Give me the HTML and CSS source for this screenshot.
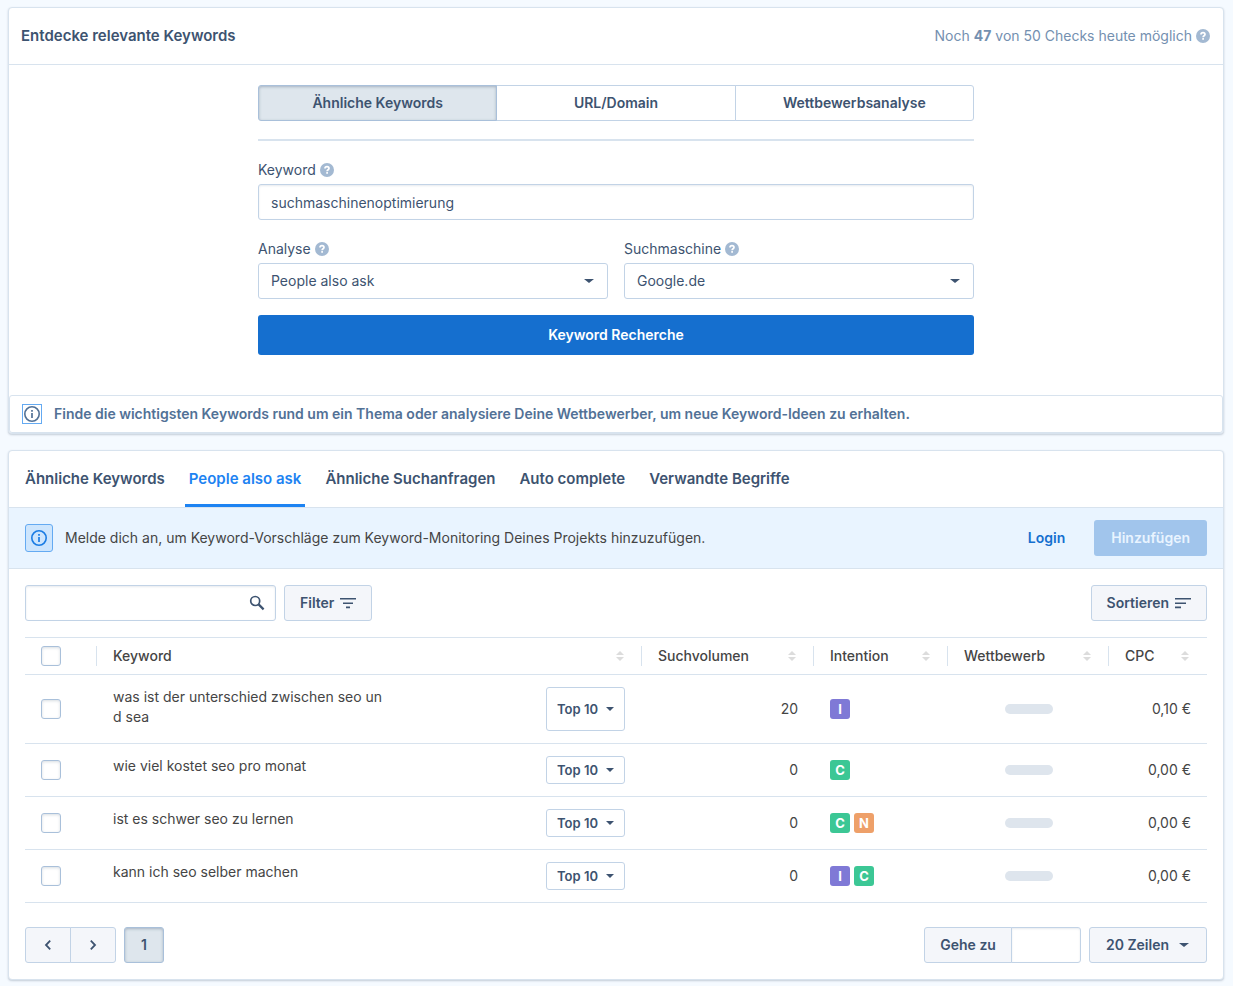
FILE: index.html
```html
<!DOCTYPE html>
<html lang="de">
<head>
<meta charset="UTF-8">
<meta name="viewport" content="width=device-width, initial-scale=1.0">
<title>Keyword Recherche</title>
<link rel="stylesheet" href="styles.css">
</head>
<body>
<svg class="sprite" aria-hidden="true">
  <symbol id="help" viewBox="0 0 14 14">
    <circle cx="7" cy="7" r="7" fill="#a3b9d2"/>
    <path d="M5 5.6C5 4.4 5.8 3.7 7 3.7s2 .6 2 1.7c0 1.3-1.9 1.4-1.9 2.8" fill="none" stroke="#fff" stroke-width="1.7"/>
    <rect x="6.2" y="9.1" width="1.8" height="1.7" rx=".5" fill="#fff"/>
  </symbol>
  <symbol id="info" viewBox="0 0 18 18">
    <circle cx="9" cy="9" r="7.2" fill="none" stroke="currentColor" stroke-width="1.6"/>
    <path d="M9 8v5M9 5v1.7" fill="none" stroke="currentColor" stroke-width="1.7"/>
  </symbol>
  <symbol id="search" viewBox="0 0 16 16">
    <circle cx="6.2" cy="6" r="4.5" fill="none" stroke="currentColor" stroke-width="1.7"/>
    <path d="M9.6 9.4l5 5" fill="none" stroke="currentColor" stroke-width="2.2"/>
  </symbol>
  <symbol id="filter" viewBox="0 0 16 12">
    <path d="M0 1.8h16M3 6.2h10M6 10.4h4" fill="none" stroke="currentColor" stroke-width="1.6"/>
  </symbol>
  <symbol id="sort" viewBox="0 0 16 12">
    <path d="M0 1.8h16M0 6.2h11M0 10.4h6" fill="none" stroke="currentColor" stroke-width="1.6"/>
  </symbol>
  <symbol id="sorter" viewBox="0 0 8 10">
    <path d="M4 0l4 4H0zM4 10l4-4H0z" fill="#dcdcdc"/>
  </symbol>
  <symbol id="left" viewBox="0 0 8 10">
    <path d="M6.2.7L2 5l4.2 4.3" fill="none" stroke="currentColor" stroke-width="1.8"/>
  </symbol>
  <symbol id="right" viewBox="0 0 8 10">
    <path d="M1.8.7L6 5 1.8 9.3" fill="none" stroke="currentColor" stroke-width="1.8"/>
  </symbol>
</svg>

<section class="card">
  <header class="card-head">
    <h1>Entdecke relevante Keywords</h1>
    <p class="quota">Noch <b>47</b> von 50 Checks heute möglich <svg class="help"><use href="#help"/></svg></p>
  </header>
  <form class="search-form">
    <div class="switch">
      <button type="button" class="active">Ähnliche Keywords</button>
      <button type="button">URL/Domain</button>
      <button type="button">Wettbewerbsanalyse</button>
    </div>
    <hr>
    <div class="field">
      <label for="keyword">Keyword <svg class="help"><use href="#help"/></svg></label>
      <input type="text" id="keyword" value="suchmaschinenoptimierung">
    </div>
    <div class="field-row">
      <div class="field">
        <label for="analyse">Analyse <svg class="help"><use href="#help"/></svg></label>
        <div class="select">
          <select id="analyse"><option>People also ask</option></select>
        </div>
      </div>
      <div class="field">
        <label for="engine">Suchmaschine <svg class="help"><use href="#help"/></svg></label>
        <div class="select">
          <select id="engine"><option>Google.de</option></select>
        </div>
      </div>
    </div>
    <button type="button" class="submit">Keyword Recherche</button>
  </form>
  <div class="hint">
    <span class="hint-icon"><svg><use href="#info"/></svg></span>
    <p>Finde die wichtigsten Keywords rund um ein Thema oder analysiere Deine Wettbewerber, um neue Keyword-Ideen zu erhalten.</p>
  </div>
</section>

<section class="card">
  <nav class="tabs">
    <a href="#">Ähnliche Keywords</a>
    <a href="#" class="active">People also ask</a>
    <a href="#">Ähnliche Suchanfragen</a>
    <a href="#">Auto complete</a>
    <a href="#">Verwandte Begriffe</a>
  </nav>
  <div class="notice">
    <span class="notice-icon"><svg><use href="#info"/></svg></span>
    <p>Melde dich an, um Keyword-Vorschläge zum Keyword-Monitoring Deines Projekts hinzuzufügen.</p>
    <a href="#" class="login">Login</a>
    <button type="button" class="add" disabled>Hinzufügen</button>
  </div>

  <div class="content">
    <div class="toolbar">
      <div class="search-box">
        <input type="text" aria-label="Suche">
        <svg><use href="#search"/></svg>
      </div>
      <button type="button" class="btn">Filter <svg><use href="#filter"/></svg></button>
      <button type="button" class="btn push">Sortieren <svg><use href="#sort"/></svg></button>
    </div>

    <table>
      <colgroup>
        <col class="col-check">
        <col>
        <col class="col-volume">
        <col class="col-intent">
        <col class="col-comp">
        <col class="col-cpc">
      </colgroup>
      <thead>
        <tr>
          <th><div class="th"><input type="checkbox" aria-label="Alle auswählen"></div></th>
          <th><div class="th">Keyword <svg><use href="#sorter"/></svg></div></th>
          <th><div class="th">Suchvolumen <svg><use href="#sorter"/></svg></div></th>
          <th><div class="th">Intention <svg><use href="#sorter"/></svg></div></th>
          <th><div class="th">Wettbewerb <svg><use href="#sorter"/></svg></div></th>
          <th><div class="th">CPC <svg><use href="#sorter"/></svg></div></th>
        </tr>
      </thead>
      <tbody>
        <tr>
          <td><input type="checkbox" aria-label="Zeile auswählen"></td>
          <td><div class="kw"><span>was ist der unterschied zwischen seo und sea</span><button type="button" class="top">Top 10</button></div></td>
          <td class="num">20</td>
          <td><div class="tags"><span class="tag i">I</span></div></td>
          <td><div class="bar"></div></td>
          <td class="num">0,10 €</td>
        </tr>
        <tr>
          <td><input type="checkbox" aria-label="Zeile auswählen"></td>
          <td><div class="kw"><span>wie viel kostet seo pro monat</span><button type="button" class="top">Top 10</button></div></td>
          <td class="num">0</td>
          <td><div class="tags"><span class="tag c">C</span></div></td>
          <td><div class="bar"></div></td>
          <td class="num">0,00 €</td>
        </tr>
        <tr>
          <td><input type="checkbox" aria-label="Zeile auswählen"></td>
          <td><div class="kw"><span>ist es schwer seo zu lernen</span><button type="button" class="top">Top 10</button></div></td>
          <td class="num">0</td>
          <td><div class="tags"><span class="tag c">C</span><span class="tag n">N</span></div></td>
          <td><div class="bar"></div></td>
          <td class="num">0,00 €</td>
        </tr>
        <tr>
          <td><input type="checkbox" aria-label="Zeile auswählen"></td>
          <td><div class="kw"><span>kann ich seo selber machen</span><button type="button" class="top">Top 10</button></div></td>
          <td class="num">0</td>
          <td><div class="tags"><span class="tag i">I</span><span class="tag c">C</span></div></td>
          <td><div class="bar"></div></td>
          <td class="num">0,00 €</td>
        </tr>
      </tbody>
    </table>

    <footer class="pager">
      <div class="group">
        <button type="button" class="btn arrow" aria-label="Zurück"><svg><use href="#left"/></svg></button>
        <button type="button" class="btn arrow" aria-label="Weiter"><svg><use href="#right"/></svg></button>
      </div>
      <button type="button" class="btn current">1</button>
      <div class="group push">
        <label class="btn" for="page">Gehe zu</label>
        <input type="text" id="page" class="page">
      </div>
      <button type="button" class="btn rows">20 Zeilen</button>
    </footer>
  </div>
</section>
</body>
</html>
```
FILE: styles.css
```css
* {
  box-sizing: border-box;
}
body {
  margin: 0;
  padding: 7px 9px 6px 8px;
  background: #f5faff;
  color: #454545;
  font: 14px/20px Inter, "Liberation Sans", sans-serif;
}
h1, p {
  margin: 0;
}
button, input, select {
  font: inherit;
  color: #3d5370;
  margin: 0;
}
button {
  font-weight: 600;
  padding: 0;
  border-radius: 3px;
}
a {
  text-decoration: none;
}
.sprite {
  position: absolute;
  width: 0;
  height: 0;
}
.card {
  background: #fff;
  border: 1px solid #d8e3ee;
  border-radius: 4px;
  box-shadow: 0 1px 2px rgba(50, 70, 100, 0.25);
  margin-bottom: 16px;
}
.card:last-child {
  margin-bottom: 0;
}
.card-head {
  display: flex;
  justify-content: space-between;
  align-items: center;
  height: 57px;
  padding: 0 13px 0 12px;
  border-bottom: 1px solid #d8e3ee;
}
h1 {
  font-size: 15px;
  font-weight: 600;
  color: #3d5370;
}
.quota {
  display: flex;
  align-items: center;
  gap: 4px;
  color: #7490b0;
}
.quota b {
  font-weight: 700;
}
.help {
  width: 14px;
  height: 14px;
}

/* search form */
.search-form {
  max-width: 716px;
  margin: 0 auto;
  padding: 20px 0 40px;
}
.switch {
  display: flex;
}
.switch button {
  flex: 1;
  height: 36px;
  margin-left: -1px;
  background: #fff;
  border: 1px solid #c2d3e6;
  border-radius: 0;
}
.switch button:first-child {
  margin-left: 0;
  border-radius: 3px 0 0 3px;
}
.switch button:last-child {
  border-radius: 0 3px 3px 0;
}
.switch .active,
.btn.current {
  position: relative;
  background: #dee6ed;
  border-color: #a9c0da;
  box-shadow: inset 0 1px 3px rgba(61, 83, 112, 0.35);
}
hr {
  height: 2px;
  margin: 18px 0 19px;
  border: 0;
  background: #d8e3ee;
}
.field {
  flex: 1;
}
.field label {
  display: flex;
  align-items: center;
  gap: 4px;
  margin-bottom: 4px;
  color: #3d5370;
}
.field input,
.select select,
.search-box input {
  display: block;
  width: 100%;
  height: 36px;
  padding: 0 12px;
  border: 1px solid #c2d3e6;
  border-radius: 3px;
  background: #fff;
}
.field input,
.search-box input,
.page {
  box-shadow: inset 0 1px 2px rgba(61, 83, 112, 0.12);
}
.field-row {
  display: flex;
  gap: 16px;
  margin: 19px 0 16px;
}
.select {
  position: relative;
}
.select select {
  appearance: none;
}
.select::after,
.top::after,
.rows::after {
  content: "";
  border: 5px solid transparent;
  border-top: 4px solid #3d5370;
  border-bottom: 0;
}
.select::after {
  position: absolute;
  right: 14px;
  top: 16px;
  pointer-events: none;
}
.submit {
  width: 100%;
  height: 40px;
  border: 0;
  background: #156fcf;
  color: #fff;
}
.hint {
  display: flex;
  align-items: center;
  gap: 12px;
  height: 38px;
  padding: 0 12px 0 12px;
  border: 1px solid #d8e3ee;
  border-radius: 3px;
  color: #527196;
  font-weight: 600;
}
.hint-icon,
.notice-icon {
  display: grid;
  place-items: center;
  flex: none;
  width: 20px;
  height: 20px;
  border: 1px solid #64aaf2;
}
.hint-icon svg,
.notice-icon svg {
  width: 18px;
  height: 18px;
}

/* results */
.tabs {
  display: flex;
  gap: 16px;
  height: 57px;
  padding: 0 12px;
  border-bottom: 1px solid #d8e3ee;
  font-size: 15px;
  font-weight: 600;
}
.tabs a {
  padding: 18px 4px 15px;
  border-bottom: 3px solid transparent;
  color: #3d5370;
}
.tabs .active {
  color: #1d83f2;
  border-color: #1d83f2;
}
.notice {
  display: flex;
  align-items: center;
  height: 61px;
  padding: 0 16px;
  background: #e9f4ff;
  border-bottom: 1px solid #d8e3ee;
}
.notice-icon {
  width: 28px;
  height: 28px;
  margin-right: 12px;
  border-radius: 3px;
  background: #cde5fd;
  color: #1a7ce4;
}
.login {
  margin: 0 29px 0 auto;
  color: #156fcf;
  font-weight: 600;
}
.add {
  height: 36px;
  padding: 0 17px;
  border: 0;
  background: #a1c5ec;
  color: #e9f4ff;
}
.content {
  padding: 16px;
}
.toolbar,
.pager {
  display: flex;
  gap: 8px;
}
.push {
  margin-left: auto;
}
.search-box {
  position: relative;
  width: 251px;
}
.search-box svg {
  position: absolute;
  right: 11px;
  top: 10px;
  width: 16px;
  height: 16px;
  color: #3d5370;
}
.btn {
  display: flex;
  align-items: center;
  justify-content: center;
  gap: 6px;
  height: 36px;
  padding: 0 15px;
  background: #f4f6fa;
  border: 1px solid #c2d3e6;
  border-radius: 3px;
  color: #3d5370;
  font-weight: 600;
}
.toolbar .btn svg {
  width: 16px;
  height: 12px;
}

table {
  width: 100%;
  margin: 16px 0 24px;
  border-collapse: separate;
  border-spacing: 0;
  table-layout: fixed;
  border-top: 1px solid #d8e3ee;
}
.col-check {
  width: 72px;
}
.col-volume {
  width: 172px;
}
.col-intent {
  width: 134px;
}
.col-comp {
  width: 161px;
}
.col-cpc {
  width: 98px;
}
th {
  padding: 8px 0;
  border-bottom: 1px solid #d8e3ee;
  font-weight: 500;
  text-align: left;
}
.th {
  display: flex;
  align-items: center;
  justify-content: space-between;
  height: 20px;
  padding: 0 17px 0 16px;
  border-right: 1px solid #d8e3ee;
}
th:last-child .th {
  border-right-color: transparent;
}
.th svg {
  width: 8px;
  height: 10px;
}
td {
  padding: 12px 16px;
  border-bottom: 1px solid #d8e3ee;
}
input[type="checkbox"] {
  display: block;
  appearance: none;
  width: 20px;
  height: 20px;
  border: 1px solid #a9c0da;
  border-radius: 3px;
  background: #fff;
  box-shadow: inset 0 1px 3px rgba(61, 83, 112, 0.2);
}
.kw {
  display: flex;
  justify-content: space-between;
}
.kw span {
  max-width: 272px;
  padding-bottom: 4px;
  word-break: break-all;
}
.top {
  display: flex;
  align-items: center;
  gap: 8px;
  min-height: 28px;
  margin-right: 1px;
  padding: 0 10px;
  background: #fff;
  border: 1px solid #c2d3e6;
  font-size: 13px;
}
.top::after {
  border-width: 4px 4px 0;
}
.num {
  text-align: right;
}
.tags {
  display: flex;
  gap: 4px;
}
.tag {
  width: 20px;
  height: 20px;
  border-radius: 3px;
  color: #fff;
  font-size: 13px;
  font-weight: 700;
  text-align: center;
}
.tag.i {
  background: #7f79d6;
}
.tag.c {
  background: #3cc795;
}
.tag.n {
  background: #eea069;
}
.bar {
  width: 48px;
  height: 10px;
  margin: 0 auto;
  border-radius: 5px;
  background: #dee5ed;
}

.group {
  display: flex;
}
.group .btn {
  border-radius: 3px 0 0 3px;
}
.group .btn + .btn {
  margin-left: -1px;
  border-radius: 0 3px 3px 0;
}
.arrow {
  width: 46px;
}
.arrow svg {
  width: 8px;
  height: 10px;
}
.btn.current {
  width: 40px;
}
.page {
  width: 70px;
  height: 36px;
  margin-left: -1px;
  border: 1px solid #c2d3e6;
  border-radius: 0 3px 3px 0;
  background: #fff;
}
.rows {
  gap: 10px;
  padding: 0 17px 0 16px;
}
```
